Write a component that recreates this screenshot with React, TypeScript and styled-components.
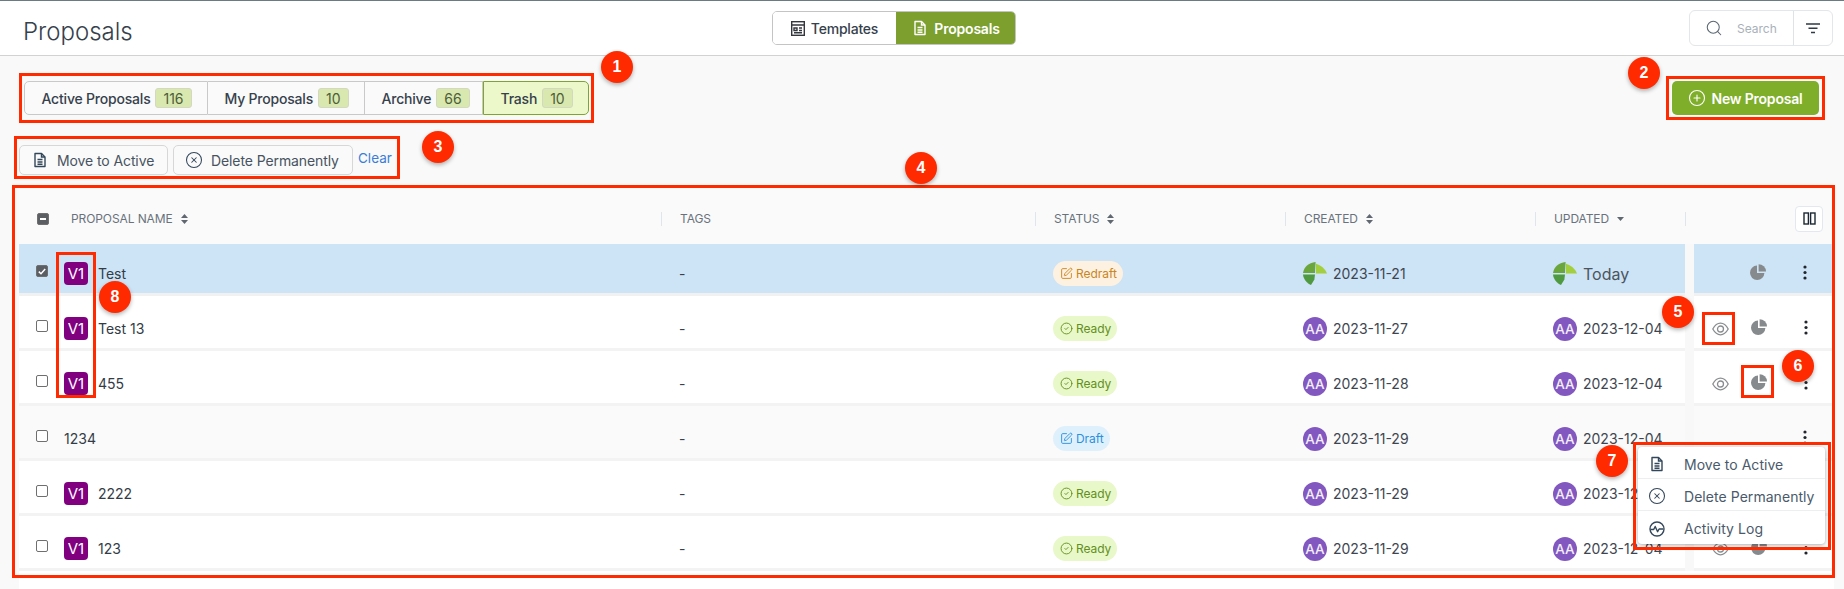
import styled, { createGlobalStyle } from 'styled-components';
import { CirclePlus, CircleCheck, CircleX, Search, SquarePen } from 'lucide-react';

const GRID_COLUMNS = '642px 374px 250px 250px 150px 9px 140px';

const GlobalStyle = createGlobalStyle`
  html, body {
    margin: 0;
    padding: 0;
    background: #f9f9f9;
  }
  body {
    font-family: Inter, "Liberation Sans", sans-serif;
    color: #36414c;
  }
  * {
    box-sizing: border-box;
  }
`;

const Page = styled.div`
  position: relative;
  display: flex;
  flex-direction: column;
  width: 1844px;
  height: 589px;
  overflow: hidden;
  background: #f9f9f9;
`;

const TopBar = styled.header`
  display: grid;
  grid-template-columns: 749px 244px 1fr;
  align-items: center;
  height: 56px;
  padding-left: 23px;
  background: #fff;
  border-top: 1px solid #6b7b84;
  border-bottom: 1px solid #d2d2d2;
`;

const Title = styled.h1`
  margin: 7px 0 0;
  font-size: 24px;
  font-weight: 300;
  color: #36414c;
`;

const Switch = styled.div`
  display: flex;
  height: 34px;
  border: 1px solid #c4c4c4;
  border-radius: 5px;
  overflow: hidden;
`;

const SwitchItem = styled.div<{ $active?: boolean }>`
  display: flex;
  flex: ${(p) => (p.$active ? '120px' : '123px')} 0 0;
  align-items: center;
  justify-content: center;
  gap: 6px;
  font-size: 14px;
  font-weight: ${(p) => (p.$active ? 600 : 500)};
  letter-spacing: -0.2px;
  color: ${(p) => (p.$active ? '#fff' : '#36414c')};
  background: ${(p) => (p.$active ? '#7c9f2e' : '#fff')};
`;

const SearchBox = styled.div`
  display: flex;
  justify-self: end;
  width: 144px;
  height: 36px;
  margin-right: 11px;
  border: 1px solid #e3e6ea;
  border-radius: 6px;
  background: #fff;
`;

const SearchField = styled.div`
  display: flex;
  flex: 1;
  align-items: center;
  gap: 14px;
  padding-left: 15px;
  font-size: 12px;
  color: #a9b1ba;
  border-right: 1px solid #dfe2e6;
  svg {
    color: #5a6672;
  }
`;

const FilterButton = styled.div`
  display: flex;
  flex: 0 0 38px;
  align-items: center;
  justify-content: center;
`;

const Content = styled.main`
  display: flex;
  flex: 1;
  flex-direction: column;
  padding: 25px 10px 0 19px;
`;

const ToolRow = styled.div`
  display: flex;
  align-items: center;
  justify-content: space-between;
  height: 34px;
`;

const Tabs = styled.div`
  display: flex;
  height: 34px;
  margin-left: 5px;
`;

const Tab = styled.div<{ $active?: boolean; $width: number }>`
  display: flex;
  flex: ${(p) => p.$width}px 0 0;
  align-items: center;
  gap: 5px;
  padding-left: 16.5px;
  font-size: 14px;
  font-weight: 500;
  letter-spacing: -0.2px;
  color: #36414c;
  background: ${(p) => (p.$active ? '#ecf8c9' : '#fafafa')};
  border: 1px solid ${(p) => (p.$active ? '#7fa52e' : '#c9c9c9')};
  border-left-width: ${(p) => (p.$active ? 1 : 0)}px;
  &:first-child {
    border-left-width: 1px;
    border-radius: 5px 0 0 5px;
  }
  &:last-child {
    border-radius: 0 5px 5px 0;
  }
`;

const TabCount = styled.span`
  display: flex;
  align-items: center;
  justify-content: center;
  height: 20px;
  padding: 0 7px;
  font-size: 14px;
  font-weight: 400;
  letter-spacing: 0;
  color: #4e5d3a;
  background: #d9e8ae;
  border: 1px solid #d3d9c1;
  border-radius: 3px;
`;

const NewButton = styled.button`
  display: flex;
  align-items: center;
  justify-content: center;
  gap: 5px;
  width: 147px;
  height: 34px;
  margin-right: 15px;
  font: 600 14px Inter, sans-serif;
  letter-spacing: -0.2px;
  color: #fff;
  background: #7fae2a;
  border: none;
  border-radius: 5px;
`;

const ActionRow = styled.div`
  display: flex;
  align-items: center;
  gap: 5px;
  height: 30px;
  margin-top: 30px;
`;

const ActionButton = styled.button<{ $width: number; $wideIcon?: boolean }>`
  display: flex;
  align-items: center;
  gap: ${(p) => (p.$wideIcon ? 8 : 9)}px;
  width: ${(p) => p.$width}px;
  height: 30px;
  padding: 0 0 0 ${(p) => (p.$wideIcon ? 11 : 12)}px;
  font: 400 14px Inter, sans-serif;
  letter-spacing: -0.1px;
  color: #47535f;
  background: #fafafa;
  border: 1px solid #d7d7d7;
  border-radius: 5px;
`;

const ClearLink = styled.a`
  margin: 0 0 4px;
  font-size: 13.5px;
  color: #3b7dd8;
`;

const Table = styled.section`
  display: flex;
  flex: 1;
  flex-direction: column;
  margin-top: 11px;
  background: #fff;
`;

const HeadRow = styled.div`
  display: grid;
  grid-template-columns: ${GRID_COLUMNS};
  align-items: center;
  height: 58px;
  padding-top: 7px;
  background: #fafafa;
`;

const HeadCell = styled.div<{ $divider?: boolean }>`
  display: flex;
  align-items: center;
  gap: 8px;
  height: 14px;
  padding-left: 18px;
  font-size: 12px;
  color: #69727c;
  letter-spacing: -0.1px;
  border-left: ${(p) => (p.$divider ? '1px solid #dfe5ec' : 'none')};
`;

const NameHead = styled(HeadCell)`
  padding-left: 18px;
  gap: 22px;
`;

const SortGroup = styled.span`
  display: flex;
  align-items: center;
  gap: 8px;
`;

const ColumnsButton = styled.div`
  display: flex;
  align-items: center;
  justify-content: center;
  justify-self: end;
  width: 28px;
  height: 26px;
  margin-right: 11px;
  background: #fff;
  border: 1px solid #e3e8ee;
  border-radius: 4px;
`;

const Row = styled.div<{ $tone: 'selected' | 'plain' | 'muted' }>`
  --cell-top: ${(p) => (p.$tone === 'selected' ? 10 : 13)}px;
  display: grid;
  grid-template-columns: ${GRID_COLUMNS};
  height: ${(p) => (p.$tone === 'selected' ? 52 : 55.1)}px;
  background: ${(p) =>
    p.$tone === 'selected' ? '#cde3f6' : p.$tone === 'muted' ? '#fafafa' : '#fff'};
  border-bottom: 3px solid;
  border-image: ${(p) =>
      p.$tone === 'selected'
        ? 'linear-gradient(#b9c8d6 34%, #f1f1f1 34%)'
        : 'linear-gradient(#e6e6e6 50%, #f3f3f3 50%)'}
    1;
`;

const Cell = styled.div`
  display: flex;
  align-items: center;
  padding-top: var(--cell-top);
  padding-left: 18px;
  font-size: 14px;
`;

const NameCell = styled(Cell)`
  padding-left: 17px;
  color: #333c46;
`;

const Gutter = styled.div`
  margin-bottom: -3px;
  background: #f8f8f8;
`;

const ActionsCell = styled(Cell)`
  padding-left: 18px;
  gap: 22px;
`;

const Check = styled.span<{ $checked?: boolean }>`
  display: flex;
  flex: 0 0 12px;
  align-items: center;
  justify-content: center;
  width: 12px;
  height: 12px;
  margin: 0 16px 5px 0;
  background: ${(p) => (p.$checked ? '#5b5f63' : '#fff')};
  border: 1px solid #6f6f6f;
  border-radius: 2px;
`;

const HeadCheck = styled(Check)`
  margin: 0;
  background: #5b5f63;
  &::after {
    content: '';
    width: 6px;
    height: 2px;
    background: #fff;
  }
`;

const Version = styled.span`
  display: flex;
  flex: 0 0 24px;
  align-items: center;
  justify-content: center;
  height: 23px;
  margin-right: 10px;
  font-size: 15px;
  color: #fff;
  background: #800080;
  border-radius: 4px;
`;

const StatusPill = styled.span<{ $tone: 'redraft' | 'ready' | 'draft' }>`
  display: flex;
  align-items: center;
  gap: 3px;
  height: 25px;
  padding: 0 6px 0 7px;
  font-size: 12px;
  letter-spacing: -0.05px;
  color: ${(p) =>
    p.$tone === 'redraft' ? '#c9851f' : p.$tone === 'ready' ? '#638f1d' : '#2b90de'};
  background: ${(p) =>
    p.$tone === 'redraft' ? '#fdf1e1' : p.$tone === 'ready' ? '#e8f8c9' : '#dff0fd'};
  border-radius: 13px;
`;

const Person = styled.div`
  display: flex;
  align-items: center;
  gap: 6px;
  color: #3d4650;
`;

const Avatar = styled.span`
  display: flex;
  align-items: center;
  justify-content: center;
  width: 24px;
  height: 24px;
  font-size: 13.5px;
  font-weight: 500;
  color: #f3eefb;
  background: #8257bf;
  border-radius: 50%;
`;

const TodayText = styled.span`
  font-size: 16px;
  color: #4b5560;
`;

const IconSlot = styled.span<{ $width?: number }>`
  display: flex;
  flex: 0 0 ${(p) => p.$width || 16}px;
  align-items: center;
  justify-content: center;
  height: 16px;
`;

const MenuSlot = styled(IconSlot)`
  margin-left: 9px;
  margin-bottom: 3px;
`;

const PieSlot = styled(IconSlot)`
  margin-bottom: 3px;
`;

const Menu = styled.ul`
  position: absolute;
  top: 447px;
  left: 1638px;
  width: 187px;
  height: 97px;
  margin: 0;
  padding: 0;
  list-style: none;
  background: #fff;
  border-radius: 4px;
  box-shadow: 0 1px 4px rgba(0, 0, 0, 0.35);
`;

const MenuItem = styled.li`
  display: grid;
  grid-template-columns: 35px 1fr;
  align-items: center;
  height: 32px;
  padding: 3px 0 0 11px;
  font-size: 14px;
  letter-spacing: 0.05px;
  white-space: nowrap;
  color: #4a5a6b;
  border-bottom: 1px solid #eceef0;
  &:last-child {
    border-bottom: none;
  }
  svg {
    color: #33475b;
  }
`;

const MenuCircleX = styled(CircleX)`
  margin-left: -1px;
`;

const MarkerBox = styled.div<{ $x: number; $y: number; $w: number; $h: number }>`
  position: absolute;
  top: ${(p) => p.$y}px;
  left: ${(p) => p.$x}px;
  width: ${(p) => p.$w}px;
  height: ${(p) => p.$h}px;
  border: 3px solid #ff2a00;
  pointer-events: none;
`;

const MarkerDot = styled.div<{ $x: number; $y: number }>`
  position: absolute;
  top: ${(p) => p.$y - 16}px;
  left: ${(p) => p.$x - 16}px;
  display: flex;
  align-items: center;
  justify-content: center;
  width: 32px;
  height: 32px;
  font: 700 16px "Liberation Sans", Arial, sans-serif;
  color: #fff;
  background: #ff2a00;
  border-radius: 50%;
  box-shadow: 0 2px 4px rgba(0, 0, 0, 0.3);
`;

function DocIcon({ size = 16, color = '#33475b' }: { size?: number; color?: string }) {
  return (
    <svg width={size} height={size} viewBox="0 0 16 16" fill="none" stroke={color} strokeWidth="1.4">
      <path d="M3 1.5h6.5L13 5v9.5H3z" strokeLinejoin="round" />
      <path d="M9.5 1.5V5H13M5.5 7.5h5M5.5 10h5M5.5 12.3h5" />
    </svg>
  );
}

function TemplateIcon() {
  return (
    <svg width="14" height="15" viewBox="0 0 14 15" fill="none" stroke="#33363d" strokeWidth="1.4">
      <rect x="0.7" y="0.7" width="12.6" height="13.6" />
      <path d="M1 4h12M3 7h3v2.5H3zM8 7h3M3 11.8h8M8 9.5h3" />
    </svg>
  );
}

function FilterIcon() {
  return (
    <svg width="14" height="11" viewBox="0 0 14 11" stroke="#2e3a46" strokeWidth="1.5">
      <path d="M0 1h14M2.5 5.2h9M5 9.5h4" />
    </svg>
  );
}

function SortIcon() {
  return (
    <svg width="7" height="10" viewBox="0 0 7 10" fill="#5f6770">
      <path d="M3.5 0 7 4H0zM3.5 10 0 6h7z" />
    </svg>
  );
}

function SortDownIcon() {
  return (
    <svg width="7" height="4" viewBox="0 0 7 4" fill="#5f6770">
      <path d="M0 0h7L3.5 4z" />
    </svg>
  );
}

function ColumnsIcon() {
  return (
    <svg width="13" height="13" viewBox="0 0 13 13" fill="none" stroke="#1c2733" strokeWidth="1.4">
      <rect x="1" y="1" width="4.4" height="11" />
      <rect x="7.6" y="1" width="4.4" height="11" />
    </svg>
  );
}

function EyeIcon() {
  return (
    <svg width="17" height="14" viewBox="0 0 17 14" fill="none" stroke="#8a8d90" strokeWidth="1.3">
      <path d="M.8 7C3 3 5.5 1.2 8.5 1.2S14 3 16.2 7C14 11 11.5 12.8 8.5 12.8S3 11 .8 7z" />
      <circle cx="8.5" cy="7" r="3" />
    </svg>
  );
}

function PieIcon() {
  return (
    <svg width="16" height="16" viewBox="0 0 16 16" fill="#868a8d">
      <path d="M7 1.6V9h7.4A7.2 7.2 0 1 1 7 1.6z" />
      <path d="M8.6.2A7.4 7.4 0 0 1 16 7.4H8.6z" />
    </svg>
  );
}

function KebabIcon() {
  return (
    <svg width="4" height="15" viewBox="0 0 4 15" fill="#20262c">
      <circle cx="2" cy="2" r="1.6" />
      <circle cx="2" cy="7.5" r="1.6" />
      <circle cx="2" cy="13" r="1.6" />
    </svg>
  );
}

function ActivityIcon() {
  return (
    <svg width="16" height="16" viewBox="0 0 16 16" fill="none" stroke="#33475b" strokeWidth="1.4">
      <circle cx="8" cy="8" r="7" />
      <path d="M1.5 8.5h3.2l1.5-3 2.4 5.2 1.5-2.7h4" strokeLinejoin="round" />
    </svg>
  );
}

function SystemLogo() {
  return (
    <svg width="24" height="23" viewBox="0 0 24 23">
      <path d="M12.6 0C5.5.8 1 5 0 11h12z" fill="#6aa63c" />
      <path d="M13 1.8c5 1.4 9 5 11 9.6H13z" fill="#a3cf3f" />
      <path d="M0 12.5h12l-.6 5L8 23C3.5 21 .5 17 0 12.5z" fill="#4f9a41" />
    </svg>
  );
}

type RowData = {
  name: string;
  version?: boolean;
  status: 'redraft' | 'ready' | 'draft';
  created: string;
  updated: string;
  tone: 'selected' | 'plain' | 'muted';
  eye?: boolean;
  pie?: boolean;
};

const ROWS: RowData[] = [
  { name: 'Test', version: true, status: 'redraft', created: '2023-11-21', updated: 'Today', tone: 'selected', pie: true },
  { name: 'Test 13', version: true, status: 'ready', created: '2023-11-27', updated: '2023-12-04', tone: 'plain', eye: true, pie: true },
  { name: '455', version: true, status: 'ready', created: '2023-11-28', updated: '2023-12-04', tone: 'plain', eye: true, pie: true },
  { name: '1234', status: 'draft', created: '2023-11-29', updated: '2023-12-04', tone: 'muted' },
  { name: '2222', version: true, status: 'ready', created: '2023-11-29', updated: '2023-12-04', tone: 'plain', eye: true, pie: true },
  { name: '123', version: true, status: 'ready', created: '2023-11-29', updated: '2023-12-04', tone: 'plain', eye: true, pie: true },
];

const STATUS_LABEL = { redraft: 'Redraft', ready: 'Ready', draft: 'Draft' };

const BOXES = [
  { x: 19, y: 73, w: 575, h: 50 },
  { x: 1666, y: 76, w: 159, h: 44 },
  { x: 14, y: 136, w: 386, h: 43 },
  { x: 12, y: 185, w: 1823, h: 393 },
  { x: 1702, y: 312, w: 33, h: 33 },
  { x: 1741, y: 365, w: 33, h: 33 },
  { x: 1633, y: 442, w: 198, h: 108 },
  { x: 56, y: 252, w: 40, h: 146 },
];

const DOTS = [
  { n: 1, x: 617, y: 67 },
  { n: 2, x: 1644, y: 73 },
  { n: 3, x: 438, y: 147 },
  { n: 4, x: 921, y: 168 },
  { n: 5, x: 1678, y: 312 },
  { n: 6, x: 1798, y: 366 },
  { n: 7, x: 1612, y: 461 },
  { n: 8, x: 115, y: 297 },
];

function StatusIcon({ status }: { status: RowData['status'] }) {
  if (status === 'ready') return <CircleCheck size={13} strokeWidth={1.7} />;
  return <SquarePen size={13} strokeWidth={1.7} />;
}

function PersonCell({ value }: { value: string }) {
  const isToday = value === 'Today';
  const isSystem = value === 'Today' || value === '2023-11-21';
  return (
    <Person>
      {isSystem ? <SystemLogo /> : <Avatar>AA</Avatar>}
      {isToday ? <TodayText>{value}</TodayText> : <span>{value}</span>}
    </Person>
  );
}

export default function App() {
  return (
    <Page>
      <GlobalStyle />
      <TopBar>
        <Title>Proposals</Title>
        <Switch>
          <SwitchItem>
            <TemplateIcon />
            Templates
          </SwitchItem>
          <SwitchItem $active>
            <DocIcon color="#fff" />
            Proposals
          </SwitchItem>
        </Switch>
        <SearchBox>
          <SearchField>
            <Search size={18} strokeWidth={1.4} />
            Search
          </SearchField>
          <FilterButton>
            <FilterIcon />
          </FilterButton>
        </SearchBox>
      </TopBar>
      <Content>
        <ToolRow>
          <Tabs>
            <Tab $width={184}>
              Active Proposals <TabCount>116</TabCount>
            </Tab>
            <Tab $width={157}>
              My Proposals <TabCount>10</TabCount>
            </Tab>
            <Tab $width={118}>
              Archive <TabCount>66</TabCount>
            </Tab>
            <Tab $width={106} $active>
              Trash <TabCount>10</TabCount>
            </Tab>
          </Tabs>
          <NewButton>
            <CirclePlus size={18} strokeWidth={1.5} />
            New Proposal
          </NewButton>
        </ToolRow>
        <ActionRow>
          <ActionButton $width={149}>
            <DocIcon />
            Move to Active
          </ActionButton>
          <ActionButton $width={180} $wideIcon>
            <CircleX size={18} strokeWidth={1.4} color="#33475b" />
            Delete Permanently
          </ActionButton>
          <ClearLink>Clear</ClearLink>
        </ActionRow>
        <Table>
          <HeadRow>
            <NameHead>
              <HeadCheck />
              <SortGroup>
                PROPOSAL NAME <SortIcon />
              </SortGroup>
            </NameHead>
            <HeadCell $divider>TAGS</HeadCell>
            <HeadCell $divider>
              STATUS <SortIcon />
            </HeadCell>
            <HeadCell $divider>
              CREATED <SortIcon />
            </HeadCell>
            <HeadCell $divider>
              UPDATED <SortDownIcon />
            </HeadCell>
            <HeadCell $divider />
            <ColumnsButton>
              <ColumnsIcon />
            </ColumnsButton>
          </HeadRow>
          {ROWS.map((row) => (
            <Row key={row.name} $tone={row.tone}>
              <NameCell>
                <Check $checked={row.tone === 'selected'}>
                  {row.tone === 'selected' && (
                    <svg width="8" height="7" viewBox="0 0 8 7" fill="none" stroke="#fff" strokeWidth="1.5">
                      <path d="M.8 3.6 3 5.7 7.2 1" />
                    </svg>
                  )}
                </Check>
                {row.version && <Version>V1</Version>}
                {row.name}
              </NameCell>
              <Cell>-</Cell>
              <Cell>
                <StatusPill $tone={row.status}>
                  <StatusIcon status={row.status} />
                  {STATUS_LABEL[row.status]}
                </StatusPill>
              </Cell>
              <Cell>
                <PersonCell value={row.created} />
              </Cell>
              <Cell>
                <PersonCell value={row.updated} />
              </Cell>
              <Gutter />
              <ActionsCell>
                <IconSlot>{row.eye && <EyeIcon />}</IconSlot>
                <PieSlot>{row.pie && <PieIcon />}</PieSlot>
                <MenuSlot>
                  <KebabIcon />
                </MenuSlot>
              </ActionsCell>
            </Row>
          ))}
        </Table>
      </Content>
      <Menu>
        <MenuItem>
          <DocIcon />
          Move to Active
        </MenuItem>
        <MenuItem>
          <MenuCircleX size={18} strokeWidth={1.4} />
          Delete Permanently
        </MenuItem>
        <MenuItem>
          <ActivityIcon />
          Activity Log
        </MenuItem>
      </Menu>
      {BOXES.map((box) => (
        <MarkerBox key={`${box.x}-${box.y}`} $x={box.x} $y={box.y} $w={box.w} $h={box.h} />
      ))}
      {DOTS.map((dot) => (
        <MarkerDot key={dot.n} $x={dot.x} $y={dot.y}>
          {dot.n}
        </MarkerDot>
      ))}
    </Page>
  );
}
